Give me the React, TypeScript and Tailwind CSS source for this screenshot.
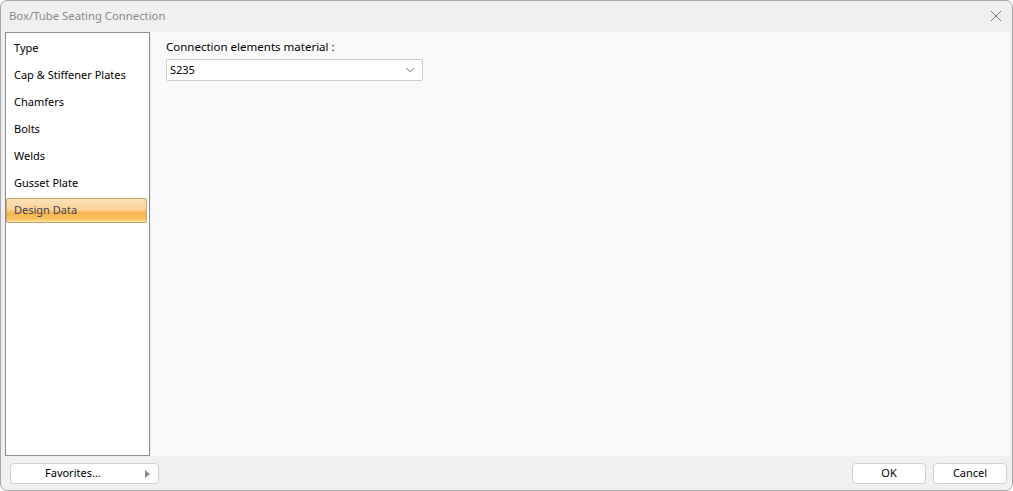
import { ChevronDown } from 'lucide-react'

const ITEMS = ['Type', 'Cap & Stiffener Plates', 'Chamfers', 'Bolts', 'Welds', 'Gusset Plate', 'Design Data']
const SELECTED = 'Design Data'

const font = { fontFamily: '"Noto Sans", "Open Sans", Arial, sans-serif' }

export default function App() {
  return (
    <div className="w-[1013px] h-[491px] bg-white" style={font}>
      <div className="w-full h-full flex flex-col border border-[#a8a8a8] rounded-[7px] bg-[#f0f0f0] overflow-hidden">
        {/* title bar */}
        <div className="h-[30px] flex items-center justify-between pl-[8px] pr-[10px] shrink-0">
          <span className="text-[11.3px] text-[#8b8b8b]">Box/Tube Seating Connection</span>
          <svg width="12" height="12" viewBox="0 0 12 12" className="text-[#7a7a7a]">
            <path d="M1 1 L11 11 M11 1 L1 11" stroke="currentColor" strokeWidth="1" />
          </svg>
        </div>

        {/* body */}
        <div className="flex h-[424px] mt-[1px] pl-[4px] pr-[3px] shrink-0">
          <div className="w-[145px] mr-[1px] h-full bg-white border border-[#8c8c8c] flex flex-col gap-[2px] pt-[3px] pr-[2px]">
            {ITEMS.map((it) =>
              it === SELECTED ? (
                <div
                  key={it}
                  className="h-[25px] flex items-center pl-[7px] text-[11px] text-[#3f4450] rounded-[2px] border border-[#c9a46c] bg-[linear-gradient(to_bottom,#fde0b8_0%,#fbd39c_45%,#f8b550_60%,#f9bf5e_85%,#fde3a0_100%)]"
                >
                  {it}
                </div>
              ) : (
                <div key={it} className="h-[25px] flex items-center pl-[8px] text-[11px] text-black">
                  {it}
                </div>
              )
            )}
          </div>
          <div className="flex-1 h-full bg-[#f9f9f9] pl-[15px] pt-[7px]">
            <div className="text-[11.5px] leading-[16px] text-black">Connection elements material :</div>
            <div className="mt-[4px] w-[257px] h-[22px] bg-white border border-[#cccccc] rounded-[2px] flex items-center justify-between pl-[3px] pr-[5px]">
              <span className="text-[11px] text-black">S235</span>
              <ChevronDown size={14} strokeWidth={1.5} className="text-[#555555]" />
            </div>
          </div>
        </div>

        {/* footer */}
        <div className="flex-1 flex items-start justify-between pt-[7px] pl-[9px] pr-[5px]">
          <button className="w-[149px] h-[21px] bg-white border border-[#d0d0d0] rounded-[4px] flex items-center text-[11px] text-black relative">
            <span className="pl-[34px]">Favorites…</span>
            <svg width="5" height="8" viewBox="0 0 5 8" className="absolute right-[8px] top-[6px]">
              <path d="M0 0 L5 4 L0 8 Z" fill="#8a8a8a" />
            </svg>
          </button>
          <div className="flex gap-[7px]">
            <button className="w-[74px] h-[21px] bg-white border border-[#d0d0d0] rounded-[4px] text-[11px] text-black">OK</button>
            <button className="w-[74px] h-[21px] bg-white border border-[#d0d0d0] rounded-[4px] text-[11px] text-black">Cancel</button>
          </div>
        </div>
      </div>
    </div>
  )
}
